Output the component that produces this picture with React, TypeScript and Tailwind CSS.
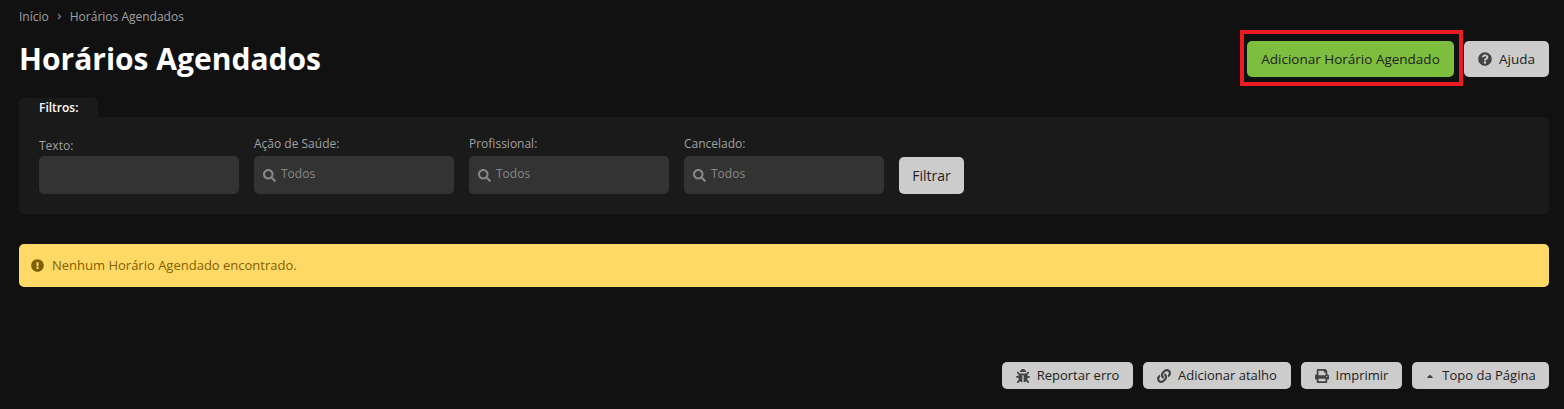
import { FaAngleRight, FaBug, FaCaretUp, FaExclamationCircle, FaLink, FaPrint, FaQuestionCircle, FaSearch } from "react-icons/fa";

const selectFilters = [
  { label: "Ação de Saúde:" },
  { label: "Profissional:" },
  { label: "Cancelado:" },
];

const footerButtons = [
  { label: "Reportar erro", icon: <FaBug className="size-[14px]" />, width: "w-[131px]" },
  { label: "Adicionar atalho", icon: <FaLink className="size-[14px]" />, width: "w-[148px]" },
  { label: "Imprimir", icon: <FaPrint className="size-[14px]" />, width: "w-[101px]" },
  { label: "Topo da Página", icon: <FaCaretUp className="size-[10px]" />, width: "w-[137px]" },
];

const App = () => {
  return (
    <div className="flex h-[409px] w-[1564px] flex-col overflow-hidden bg-[#111111] pr-[15px] pl-[19px] font-['Open_Sans',sans-serif] text-[13.5px] text-[#222222]">
      {/* breadcrumb */}
      <div className="mt-[8px] flex h-[17px] items-center text-[12px] text-[#a0a0a0]">
        <span>Início</span>
        <FaAngleRight className="mr-[6px] ml-[6px] size-[9px] text-[#777777]" />
        <span>Horários Agendados</span>
      </div>

      {/* header */}
      <div className="mt-[16px] flex h-[36px] items-center justify-between">
        <h1 className="-mt-[2px] text-[30px] font-bold text-white">Horários Agendados</h1>
        <div className="flex gap-[10px]">
          <div className="relative">
            <button className="flex h-[36px] w-[207px] items-center justify-center rounded-[5px] bg-[#7dbe3f]">
              Adicionar Horário Agendado
            </button>
            <div className="absolute -top-[11px] -right-[9px] -bottom-[9px] -left-[7px] border-4 border-[#ed1c24]" />
          </div>
          <button className="flex h-[36px] w-[85px] items-center justify-center gap-[7px] rounded-[5px] bg-[#cccccc]">
            <FaQuestionCircle className="size-[14px] text-[#444444]" />
            Ajuda
          </button>
        </div>
      </div>

      {/* filters */}
      <div className="mt-[21px] flex h-[19px] w-[79px] items-center rounded-t-[5px] bg-[#1a1a1a] pl-[20px] text-[12px] font-semibold text-white">
        Filtros:
      </div>
      <div className="flex h-[97px] items-start gap-[15px] rounded-[5px] rounded-tl-none bg-[#1a1a1a] px-[20px]">
        <div className="w-[200px] pt-[20px]">
          <div className="h-[19px] text-[12px] leading-[18px] text-[#a0a0a0]">Texto:</div>
          <div className="h-[38px] rounded-[5px] bg-[#333333]" />
        </div>
        {selectFilters.map((filter) => (
          <div key={filter.label} className="w-[200px] pt-[18px]">
            <div className="h-[21px] text-[12px] leading-[18px] text-[#a0a0a0]">{filter.label}</div>
            <div className="flex h-[38px] items-center gap-[5px] rounded-[5px] bg-[#333333] pb-[2px] pl-[9px] text-[12px] text-[#888888]">
              <FaSearch className="mt-[3px] size-[13px]" />
              Todos
            </div>
          </div>
        ))}
        <button className="mt-[40px] h-[37px] w-[65px] rounded-[5px] bg-[#cccccc] text-[14px]">Filtrar</button>
      </div>

      {/* empty alert */}
      <div className="mt-[30px] flex h-[43px] items-center gap-[8px] rounded-[5px] bg-[#ffd966] pl-[12px] text-[13px] text-[#7f6000]">
        <FaExclamationCircle className="size-[13px]" />
        Nenhum Horário Agendado encontrado.
      </div>

      {/* footer actions */}
      <div className="mt-[75px] flex justify-end gap-[10px]">
        {footerButtons.map((button) => (
          <button
            key={button.label}
            className={`flex h-[27px] items-center justify-center gap-[7px] rounded-[5px] bg-[#cccccc] text-[13px] ${button.width}`}
          >
            <span className="text-[#444444]">{button.icon}</span>
            {button.label}
          </button>
        ))}
      </div>
    </div>
  );
};

export default App;
